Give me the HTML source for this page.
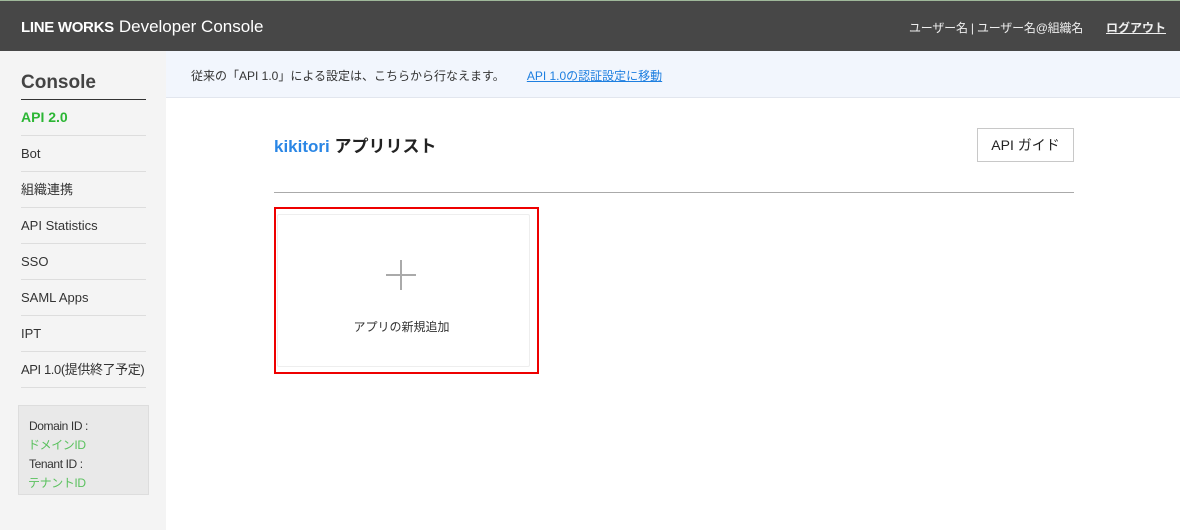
<!DOCTYPE html>
<html><head><meta charset="utf-8"><style>
*{margin:0;padding:0;box-sizing:border-box}
body{width:1180px;height:530px;overflow:hidden;font-family:"Liberation Sans","Noto Sans CJK JP",sans-serif;background:#fff;position:relative;color:#333}
.hd{position:absolute;left:0;top:0;width:1180px;height:51px;background:#474747;border-top:1px solid #9fb89a}
.logo{position:absolute;left:21px;top:16px;color:#fff;font-size:17px;white-space:nowrap}
.logo b{font-size:15px;letter-spacing:-0.3px;margin-right:5px}
.user{position:absolute;left:909px;top:18px;color:#eee;font-size:12px;white-space:nowrap;letter-spacing:-0.2px}
.lo{position:absolute;left:1106px;top:18px;color:#eee;font-size:12px;text-decoration:underline;font-weight:bold;white-space:nowrap}
.sb{position:absolute;left:0;top:51px;width:166px;height:479px;background:#f4f4f4}
.ct{position:absolute;left:21px;top:21px;font-size:19px;font-weight:bold;color:#444;width:125px;border-bottom:1px solid #333;padding-bottom:5px}
.mi{position:absolute;left:21px;width:125px;height:36px;border-bottom:1px solid #ddd;font-size:13px;line-height:36px;color:#333;white-space:nowrap}
.box{position:absolute;left:18px;top:405px;width:131px;height:90px;background:#e9e9e9;border:1px solid #ddd;font-size:12px;padding:11px 0 0 10px;line-height:19px;letter-spacing:-0.4px}
.box span{color:#5ac15e;display:block;margin-left:-1px}
.bn{position:absolute;left:166px;top:51px;width:1014px;height:47px;background:#f2f6fd;border-bottom:1px solid #e2e6ee;font-size:12px;color:#333;padding:16px 0 0 25px}
.bn a{color:#1e7fe0;text-decoration:underline;margin-left:22px}
.tt{position:absolute;left:274px;top:132px;font-size:17px;font-weight:bold;color:#222}
.tt span{color:#2a86e5}
.btn{position:absolute;left:977px;top:128px;width:97px;height:34px;border:1px solid #c8c8c8;background:#fff;font-size:14px;text-align:center;line-height:32px;color:#222}
.hr{position:absolute;left:274px;top:192px;width:800px;height:1px;background:#aaa}
.card{position:absolute;left:274px;top:207px;width:265px;height:167px;border:2px solid #e00}
.inner{position:absolute;left:1px;top:5px;width:253px;height:153px;border:1px solid #eee;border-radius:2px}
.pl1{position:absolute;left:386px;top:274px;width:30px;height:2px;background:#aaa}
.pl2{position:absolute;left:400px;top:260px;width:2px;height:30px;background:#aaa}
.add{position:absolute;left:269px;top:318px;width:265px;text-align:center;font-size:12px;color:#333}
</style></head><body>
<div class="hd"><div class="logo"><b>LINE WORKS</b>Developer Console</div>
<div class="user">ユーザー名 | ユーザー名@組織名</div><div class="lo">ログアウト</div></div>
<div class="sb">
<div class="ct">Console</div>
<div class="mi" style="top:49px;color:#2bb634;font-weight:bold;font-size:14px;height:36px;line-height:34px">API 2.0</div>
<div class="mi" style="top:85px">Bot</div>
<div class="mi" style="top:121px">組織連携</div>
<div class="mi" style="top:157px">API Statistics</div>
<div class="mi" style="top:193px">SSO</div>
<div class="mi" style="top:229px">SAML Apps</div>
<div class="mi" style="top:265px">IPT</div>
<div class="mi" style="top:301px;letter-spacing:-0.4px">API 1.0(提供終了予定)</div>
</div>
<div class="box">Domain ID :<span>ドメインID</span>Tenant ID :<span>テナントID</span></div>
<div class="bn">従来の「API 1.0」による設定は、こちらから行なえます。<a>API 1.0の認証設定に移動</a></div>
<div class="tt"><span>kikitori</span> アプリリスト</div>
<div class="btn">API ガイド</div>
<div class="hr"></div>
<div class="card"><div class="inner"></div></div>
<div class="pl1"></div><div class="pl2"></div>
<div class="add">アプリの新規追加</div>
</body></html>
